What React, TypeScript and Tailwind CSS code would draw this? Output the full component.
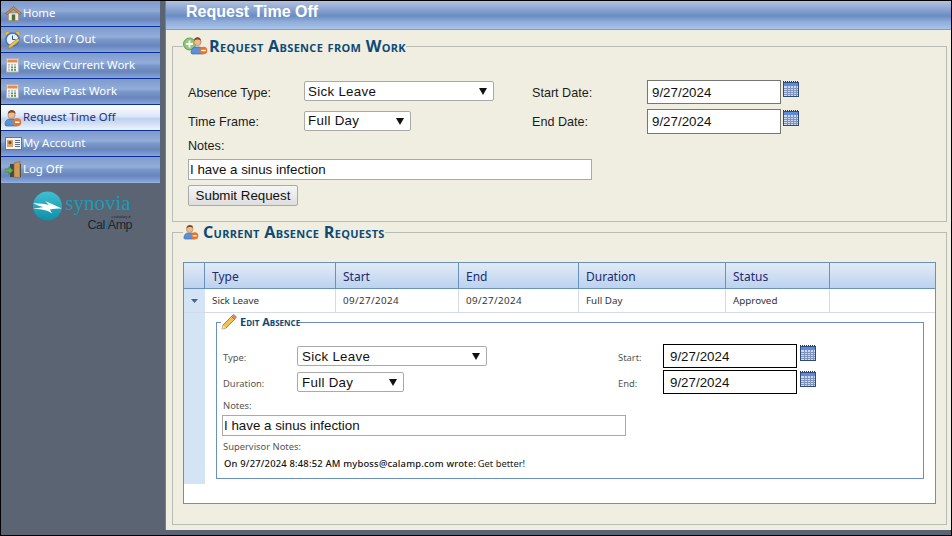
import React from "react";

const Cal = () => (
  <svg width="16" height="16" viewBox="0 0 16 16" className="shrink-0">
    <rect x="0" y="1" width="16" height="15" fill="#2f4a73" />
    <rect x="1" y="2" width="14" height="3" fill="#5b8be0" />
    <rect x="1" y="5" width="14" height="10" fill="#cfd9ee" />
    {[4, 7, 10, 13].map((x) => <rect key={x} x={x} y="5" width="1" height="10" fill="#7f93bd" />)}
    {[7, 9, 11, 13].map((y) => <rect key={y} x="1" y={y} width="14" height="1" fill="#7f93bd" />)}
    {[0, 2, 4, 6, 8, 10, 12, 14].map((x) => <rect key={x} x={x} y="0" width="1" height="1" fill="#333" />)}
  </svg>
);

const Person = ({ size = 18 }: { size?: number }) => (
  <svg width={size} height={size} viewBox="0 0 18 18" className="shrink-0">
    <path d="M1 16c0-4 2-6 5-6h3c2 0 3 1 4 2v5H2z" fill="#5b8fd6" stroke="#33609f" strokeWidth=".6" />
    <circle cx="7.5" cy="6" r="3.6" fill="#eeb98c" stroke="#a8744a" strokeWidth=".6" />
    <path d="M3.8 5c0-3 2-4 4-4s3.800 1 3.800 4c-1-1.500-2-1.500-3.800-1.500S5 4 3.800 5z" fill="#7a4a24" />
    <circle cx="13.200" cy="13.200" r="4" fill="#e8742a" />
    <rect x="11" y="12.500" width="4.400" height="1.500" fill="#fff" />
  </svg>
);

const Home = () => (
  <svg width="17" height="15" viewBox="0 0 17 15" className="shrink-0">
    <path d="M3.500 7v7.500h10V7z" fill="#f2ead8" stroke="#9a8a68" strokeWidth=".6" />
    <path d="M0.500 7.500 8.500 0.500l8 7-1.800 1L8.500 3.500 2.300 8.500z" fill="#cf8f45" stroke="#7d5220" strokeWidth=".6" />
    <rect x="6.800" y="8.500" width="3.400" height="6" fill="#4f6f35" />
  </svg>
);

const Clock = () => (
  <svg width="18" height="18" viewBox="0 0 18 18" className="shrink-0">
    <circle cx="3.500" cy="3" r="2.500" fill="#e9c03c" stroke="#a9852a" strokeWidth=".5" />
    <circle cx="13.500" cy="3" r="2.500" fill="#e9c03c" stroke="#a9852a" strokeWidth=".5" />
    <circle cx="8.500" cy="8.500" r="6.500" fill="#e6effa" stroke="#3f73b8" strokeWidth="1.500" />
    <path d="M8.500 4.500v4h3" fill="none" stroke="#33507a" strokeWidth="1" />
    <path d="M4 17.500l1-3 9-7 2 2-9 7z" fill="#eec24e" stroke="#9a6f1e" strokeWidth=".6" />
  </svg>
);

const Sheet = () => (
  <svg width="14" height="15" viewBox="0 0 14 15" className="shrink-0">
    <rect x=".5" y=".5" width="12" height="13.500" fill="#f6f6f8" stroke="#a9b2c2" />
    <rect x="1.500" y="1.500" width="10" height="3" fill="#ea8a4a" />
    {[2, 5, 8].map((x) => [6, 8.500, 11].map((y) => (
      <rect key={`${x}-${y}`} x={x} y={y} width="2" height="1.800" fill={y > 7 && x > 3 ? "#5a9a4a" : "#b8bfca"} />
    )))}
  </svg>
);

const Card = () => (
  <svg width="17" height="14" viewBox="0 0 17 14" className="shrink-0">
    <rect x=".5" y=".5" width="16" height="12" fill="#f4f4f0" stroke="#6b7480" />
    <rect x="2" y="3" width="6" height="7" fill="#d7a36f" />
    <circle cx="5" cy="5.500" r="1.500" fill="#7a4a24" />
    {[3, 5, 7, 9].map((y) => <rect key={y} x="10" y={y} width="5" height="1" fill="#59708f" />)}
  </svg>
);

const Door = () => (
  <svg width="17" height="18" viewBox="0 0 17 18" className="shrink-0">
    <rect x="5" y="3" width="11" height="13" fill="#3f4a4d" />
    <path d="M9 2l6-1.500V17l-6-1z" fill="#d09a58" stroke="#8b5f2a" strokeWidth=".6" />
    <path d="M0 8h4V5.500L8 9.500l-4 4V11H0z" fill="#6bb04a" stroke="#3f7a2a" strokeWidth=".6" />
  </svg>
);

const Pencil = () => (
  <svg width="16" height="16" viewBox="0 0 16 16" className="shrink-0">
    <path d="M1 15l1-4 8.500-8.500 3 3L5 14z" fill="#f0c050" stroke="#a06c18" strokeWidth=".8" />
    <path d="M10.500 2.500l1.500-1.500a1 1 0 0 1 1.500 0l1.500 1.500a1 1 0 0 1 0 1.500l-1.500 1.500z" fill="#e08a6a" stroke="#a06c18" strokeWidth=".6" />
    <path d="M1 15l1-4 3 3z" fill="#f4dcc0" />
  </svg>
);

const AddPerson = () => (
  <svg width="25" height="18" viewBox="0 0 25 18" className="shrink-0">
    <circle cx="6.500" cy="7" r="6" fill="#8ec97a" stroke="#4f8f45" strokeWidth=".8" />
    <path d="M6.500 3.500v7M3 7h7" stroke="#fff" strokeWidth="1.800" />
    <path d="M8 16c0-4 2-6 5-6h3c2 0 3 1 4 2v5H9z" fill="#5b8fd6" stroke="#33609f" strokeWidth=".6" />
    <circle cx="14.500" cy="5" r="3.600" fill="#eeb98c" stroke="#a8744a" strokeWidth=".6" />
    <path d="M11 4c0-3 2-3.800 3.500-3.800S18 1 18 4c-1-1.500-2-1.500-3.500-1.500S12 3 11 4z" fill="#7a4a24" />
    <circle cx="20.500" cy="13.500" r="3.800" fill="#e8742a" />
    <rect x="18.300" y="12.800" width="4.400" height="1.400" fill="#fff" />
  </svg>
);

const Arrow = () => (
  <svg width="8" height="7" viewBox="0 0 8 7" className="shrink-0"><path d="M0 0h8L4 7z" fill="#111" /></svg>
);

const navItems = [
  { label: "Home", icon: <Home /> },
  { label: "Clock In / Out", icon: <Clock /> },
  { label: "Review Current Work", icon: <Sheet /> },
  { label: "Review Past Work", icon: <Sheet /> },
  { label: "Request Time Off", icon: <Person />, active: true },
  { label: "My Account", icon: <Card /> },
  { label: "Log Off", icon: <Door /> },
];

const Select = ({ value, w, cls = "pl-[3px]" }: { value: string; w: string; cls?: string }) => (
  <div className={`${w} ${cls} h-[20px] text-[13.33px] flex items-center justify-between border border-[#a9a9a9] rounded-[2px] bg-white pr-[6px] text-[#111] tracking-[0.3px]`}>
    <span>{value}</span>
    <Arrow />
  </div>
);

const Legend = ({ icon, children, cls }: { icon: React.ReactNode; children: React.ReactNode; cls: string }) => (
  <legend className={`flex items-center [font-variant:small-caps] font-bold text-[#0e4a78] font-['Open_Sans',sans-serif] ${cls}`}>
    {icon}
    <span>{children}</span>
  </legend>
);

const cols = ["w-[131px]", "w-[123px]", "w-[120px]", "w-[147px]", "w-[104px]"];

export default function App() {
  return (
    <div className="w-[952px] h-[536px] border border-black bg-[#5a6473] flex overflow-hidden font-['Liberation_Sans',sans-serif]">
      <aside className="w-[164px] shrink-0 flex flex-col">
        <nav className="w-[159px] flex flex-col border-b border-[#8fb0e0] font-['Noto_Sans',sans-serif]">
          {navItems.map((n) => (
            <div
              key={n.label}
              className={`h-[26px] last:h-[25px] flex items-center border-b last:border-b-0 border-[#0a2f9c] pl-[3px] text-[11.4px] ${
                n.active
                  ? "bg-[linear-gradient(#ffffff_0%,#dce7f8_45%,#bcd0ef_55%,#eef4fd_100%)] text-[#24327e]"
                  : "bg-[linear-gradient(#7f9bcb_0%,#92acda_40%,#7b98ca_50%,#6786bd_75%,#88a5d6_100%)] text-white"
              }`}
            >
              <span className="w-[18px] flex justify-center shrink-0">{n.icon}</span>
              <span className="ml-[1px] pb-[2px]">{n.label}</span>
            </div>
          ))}
        </nav>
        <div className="w-[159px] mt-[8px] flex flex-col items-center">
          <div className="flex items-start ml-[2px] h-[30px]">
            <svg width="31" height="30" viewBox="0 0 31 30" className="shrink-0">
              <defs>
                <linearGradient id="lg" x1="0" y1="0" x2="0" y2="1">
                  <stop offset="0" stopColor="#3fc0d2" />
                  <stop offset="1" stopColor="#0f8ea8" />
                </linearGradient>
              </defs>
              <circle cx="15.500" cy="15" r="14.500" fill="url(#lg)" />
              <path d="M1 12c7 .5 12 1 16 2l-4-4 17 7.500c-5 0-9 0-12 1l2 4c-4-3-8-4-19-5 6-.5 8-1 10-1.500C8 15 4 14 1 12z" fill="#fff" />
            </svg>
            <div className="ml-[2px] pt-[1px] flex flex-col">
              <span className="font-['Liberation_Serif',serif] text-[21px] leading-[23px] text-[#1a9cb3]">synovia</span>
              <span className="self-end text-[3px] leading-[4px] text-[#1d2530]">a subsidiary of</span>
            </div>
          </div>
          <div className="self-end mr-[28px] -mt-[2px] text-[12.5px] leading-[13px] text-[#1d2530] tracking-[-0.5px]">
            Cal<span className="text-[#0f7f96]">/</span>Amp
          </div>
        </div>
      </aside>

      <main className="flex-1 flex flex-col border-l border-[#5b85c2] bg-[#f0eee1] h-[529px]">
        <header className="h-[30px] shrink-0 -mt-[1px] border-b border-[#7d9cc9] bg-[linear-gradient(#b8c6e2_0%,#7f9ccc_40%,#6a8cc4_55%,#8fadd9_75%,#a9c3e8_100%)] pl-[20px] flex items-start">
          <h1 className="text-[16px] leading-[24px] font-bold text-white">Request Time Off</h1>
        </header>

        <div className="pl-[6px] pt-[4px] flex flex-col">
          <fieldset className="w-[775px] h-[188px] border border-[#b9bcb4] text-[12.6px] text-[#1c1c1c]">
            <Legend cls="ml-[10px] h-[24px] text-[16.2px] leading-[24px] tracking-[0.3px]" icon={<span className="mr-[1px]"><AddPerson /></span>}>
              Request Absence from Work
            </Legend>
            <div className="pl-[15px] pt-[22px]">
              <div className="flex items-start h-[29px]">
                <span className="w-[116px] mt-[4px]">Absence Type:</span>
                <div className="mt-[1px]"><Select value="Sick Leave" w="w-[190px]" cls="pl-[3px] pt-[1px]" /></div>
                <span className="ml-[38px] w-[115px] mt-[4px]">Start Date:</span>
                <div className="w-[134px] h-[24px] border border-[#767676] bg-white pl-[4px] pt-[1px] flex items-center text-[13.33px] text-[#111]">9/27/2024</div>
                <div className="ml-[2px] mt-[1px]"><Cal /></div>
              </div>
              <div className="flex items-start h-[28px]">
                <span className="w-[116px] mt-[4px]">Time Frame:</span>
                <div className="mt-[2px]"><Select value="Full Day" w="w-[107px]" /></div>
                <span className="ml-[121px] w-[115px] mt-[4px]">End Date:</span>
                <div className="w-[134px] h-[25px] border border-[#767676] bg-white pl-[4px] pt-[1px] flex items-center text-[13.33px] text-[#111]">9/27/2024</div>
                <div className="ml-[2px] mt-[1px]"><Cal /></div>
              </div>
              <div className="h-[22px] leading-[18px]">Notes:</div>
              <div className="w-[404px] h-[21px] border border-[#a9a9a9] bg-white pl-[1px] flex items-center text-[13.33px] text-[#111]">I have a sinus infection</div>
              <button className="mt-[5px] w-[110px] h-[21px] border border-[#a9a9a9] rounded-[2px] bg-[linear-gradient(#f6f6f6,#dedede)] text-[13.33px] text-[#111]">Submit Request</button>
            </div>
          </fieldset>

          <fieldset className="-mt-[2px] w-[775px] h-[305px] border border-[#b9bcb4]">
            <Legend cls="ml-[10px] h-[24px] text-[16.2px] leading-[24px] tracking-[0.3px]" icon={<span className="mr-[4px]"><Person size={16} /></span>}>
              Current Absence Requests
            </Legend>
            <div className="ml-[10px] mt-[18px] w-[753px] h-[242px] border border-[#6a90c0] bg-white text-[#333]">
              <div className="flex h-[26px] border-b border-[#6a90c0] bg-[linear-gradient(#e2ebf7,#bcd2ee)] font-['Noto_Sans',sans-serif] text-[12px] text-[#1d2a70]">
                <div className="w-[21px] border-r border-[#6a90c0]" />
                {["Type", "Start", "End", "Duration", "Status"].map((h, i) => (
                  <div key={h} className={`${cols[i]} border-r border-[#6a90c0] pl-[7px] leading-[27px]`}>{h}</div>
                ))}
              </div>
              <div className="flex h-[24px] border-b border-[#d3dbe9] font-['Noto_Sans',sans-serif] text-[9.8px]">
                <div className="w-[21px] bg-[#d5e4f5] flex items-center justify-center">
                  <svg width="7" height="4" viewBox="0 0 7 4"><path d="M0 0h7L3.500 4z" fill="#4f5f96" /></svg>
                </div>
                {["Sick Leave", "09/27/2024", "09/27/2024", "Full Day", "Approved"].map((c, i) => (
                  <div key={i} className={`${cols[i]} border-r border-[#d3dbe9] pl-[7px] leading-[23px] ${i === 1 || i === 2 ? "tracking-[0.4px]" : ""}`}>{c}</div>
                ))}
              </div>
              <div className="flex">
                <div className="w-[21px] h-[171px] bg-[#d5e4f5]" />
                <fieldset className="ml-[11px] w-[708px] h-[166px] border border-[#6a90c0] font-['Noto_Sans',sans-serif] text-[9.4px] text-[#555]">
                  <Legend cls="ml-[4px] h-[18px] text-[11px] leading-[18px]" icon={<span className="mr-[3px]"><Pencil /></span>}>
                    Edit Absence
                  </Legend>
                  <div className="pl-[6px] pt-[13px]">
                    <div className="flex items-start h-[26px]">
                      <span className="w-[74px] mt-[7px]">Type:</span>
                      <div className="mt-[2px] font-['Liberation_Sans',sans-serif]"><Select value="Sick Leave" w="w-[190px]" cls="pl-[4px] pt-[1px]" /></div>
                      <span className="ml-[131px] w-[45px] mt-[7px]">Start:</span>
                      <div className="w-[134px] h-[24px] border border-black bg-white pl-[6px] pt-[1px] flex items-center text-[13.33px] text-[#111] font-['Liberation_Sans',sans-serif]">9/27/2024</div>
                      <div className="ml-[3px] mt-[1px]"><Cal /></div>
                    </div>
                    <div className="flex items-start h-[29px]">
                      <span className="w-[74px] mt-[7px]">Duration:</span>
                      <div className="mt-[2px] font-['Liberation_Sans',sans-serif]"><Select value="Full Day" w="w-[107px]" cls="pl-[4px] pt-[1px]" /></div>
                      <span className="ml-[214px] w-[45px] mt-[7px]">End:</span>
                      <div className="w-[134px] h-[24px] border border-black bg-white pl-[6px] pt-[1px] flex items-center text-[13.33px] text-[#111] font-['Liberation_Sans',sans-serif]">9/27/2024</div>
                      <div className="ml-[3px] mt-[1px]"><Cal /></div>
                    </div>
                    <div className="h-[16px] leading-[13px]">Notes:</div>
                    <div className="-ml-[1px] w-[404px] h-[21px] border border-[#a9a9a9] bg-white pl-[1px] flex items-center text-[13.33px] text-[#111] font-['Liberation_Sans',sans-serif]">I have a sinus infection</div>
                    <div className="mt-[4px] h-[14px] leading-[14px]">Supervisor Notes:</div>
                    <div className="mt-[3px] pl-[1px] h-[14px] leading-[14px] text-[#222]">
                      <span className="font-medium text-[#111] tracking-[0.2px]">On 9/27/2024 8:48:52 AM myboss@calamp.com wrote:</span> <span className="-ml-[1px]">Get better!</span>
                    </div>
                  </div>
                </fieldset>
              </div>
            </div>
          </fieldset>
        </div>
      </main>
    </div>
  );
}
